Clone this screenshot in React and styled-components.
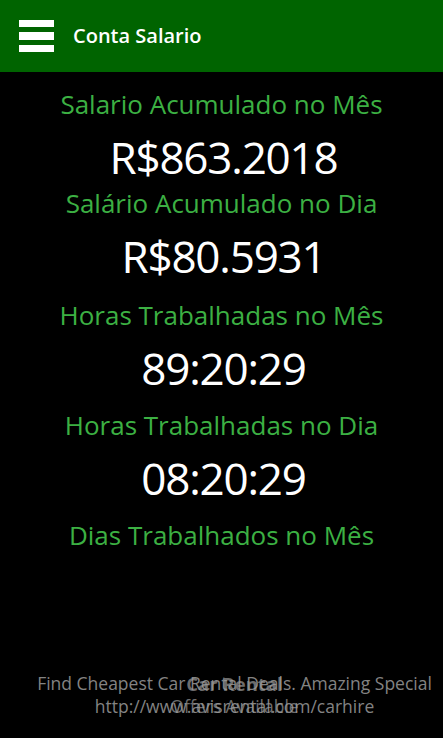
import React from "react";
import styled, { createGlobalStyle } from "styled-components";

const GlobalStyle = createGlobalStyle`
  html, body {
    margin: 0;
    padding: 0;
    background: #000;
  }
  body {
    font-family: "Open Sans", "Noto Sans", sans-serif;
  }
`;

const Page = styled.div`
  display: flex;
  flex-direction: column;
  min-height: 100vh;
  background: #000;
`;

const Header = styled.header`
  display: flex;
  align-items: center;
  height: 72px;
  padding-left: 19px;
  background: #006400;
  box-sizing: border-box;
`;

const Hamburger = styled.div`
  display: flex;
  flex-direction: column;
  gap: 5px;
  width: 35px;
`;

const Bar = styled.span`
  display: block;
  height: 7.5px;
  background: #ffffff;
`;

const Title = styled.h1`
  margin: 0 0 0 19px;
  font-size: 20px;
  font-weight: 600;
  color: #ffffff;
  line-height: 1;
`;

const Main = styled.main`
  display: flex;
  flex-direction: column;
  align-items: center;
`;

const Stat = styled.section`
  display: flex;
  flex-direction: column;
  align-items: center;
  margin-top: ${(p) => p.$mt}px;
`;

const Label = styled.div`
  font-size: 26px;
  line-height: 32px;
  color: #3cb043;
  white-space: nowrap;
`;

const Value = styled.div`
  margin-top: 11px;
  padding-left: 4px;
  font-size: 44px;
  line-height: 52px;
  letter-spacing: -1.2px;
  color: #ffffff;
  white-space: nowrap;
`;

const Ad = styled.footer`
  position: relative;
  margin-top: auto;
  height: 80px;
  margin-left: 26px;
`;

const AdLayer = styled.div`
  position: absolute;
  inset: 0;
  display: flex;
  flex-direction: column;
  align-items: center;
  padding-top: 14px;
  color: #9a9a9a;
  opacity: ${(p) => p.$opacity};
`;

const AdLine = styled.div`
  font-size: ${(p) => (p.$bold ? 18.5 : 17.5)}px;
  line-height: 23px;
  font-weight: ${(p) => (p.$bold ? 700 : 400)};
  white-space: nowrap;
`;

const stats = [
  { label: "Salario Acumulado no Mês", value: "R$863.2018", mt: 16 },
  { label: "Salário Acumulado no Dia", value: "R$80.5931", mt: 4 },
  { label: "Horas Trabalhadas no Mês", value: "89:20:29", mt: 17 },
  { label: "Horas Trabalhadas no Dia", value: "08:20:29", mt: 15 },
  { label: "Dias Trabalhados no Mês", value: null, mt: 15 },
];

export default function App() {
  return (
    <Page>
      <GlobalStyle />
      <Header>
        <Hamburger>
          <Bar />
          <Bar />
          <Bar />
        </Hamburger>
        <Title>Conta Salario</Title>
      </Header>
      <Main>
        {stats.map((s) => (
          <Stat key={s.label} $mt={s.mt}>
            <Label>{s.label}</Label>
            {s.value && <Value>{s.value}</Value>}
          </Stat>
        ))}
      </Main>
      <Ad>
        <AdLayer $opacity={0.85}>
          <AdLine>Find Cheapest Car Rental Deals. Amazing Special</AdLine>
          <AdLine>http://www.avisrental.com/carhire</AdLine>
        </AdLayer>
        <AdLayer $opacity={0.7}>
          <AdLine $bold>Car Rental</AdLine>
          <AdLine>Offers Available</AdLine>
        </AdLayer>
      </Ad>
    </Page>
  );
}
